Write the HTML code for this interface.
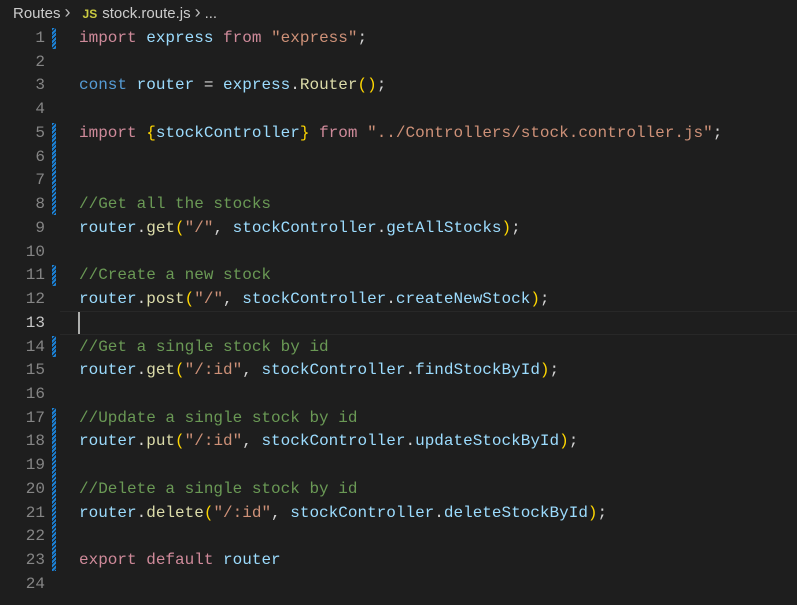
<!DOCTYPE html>
<html><head><style>
body{margin:0;width:797px;height:605px;background:#1e1e1e;overflow:hidden;position:relative;font-family:"Liberation Mono",monospace;}
.bc{position:absolute;left:13px;top:5px;font:15px "Liberation Sans",sans-serif;color:#cccccc;white-space:nowrap;}
.bc .js{color:#cbcb41;font-weight:bold;font-size:12px;margin:0 5px 0 8px;}
.bc .ch{color:#bbb;margin:0 4px;font-size:18px;line-height:15px;}
.ln{position:absolute;left:0;width:45px;text-align:right;color:#858585;font-size:16px;line-height:23.74px;}
.ln div{height:23.74px;}
.code{position:absolute;left:79px;font-size:16px;line-height:23.74px;color:#d4d4d4;}
.row{height:23.74px;white-space:pre;}
.k{color:#cf8a9a}.b{color:#569cd6}.v{color:#9cdcfe}.f{color:#dcdcaa}.s{color:#ce9178}.c{color:#6a9955}.y{color:#ffd700}
.strip{position:absolute;left:52px;width:4px;background:repeating-linear-gradient(135deg,#1b81d6 0 2px,#1e1e1e 2px 3px);}
.cur{position:absolute;left:60px;right:0;top:311px;height:22px;border-top:1px solid #282828;border-bottom:1px solid #282828;}
.caret{position:absolute;left:78px;top:312px;width:2px;height:22px;background:#aeafad;}
</style></head><body>
<div class="bc">Routes<span class="ch">&#x203A;</span><span class="js">JS</span>stock.route.js<span class="ch">&#x203A;</span>...</div>
<div class="cur"></div><div class="caret"></div>
<div class="strip" style="top:28px;height:21px"></div>
<div class="strip" style="top:123px;height:92px"></div>
<div class="strip" style="top:265px;height:21px"></div>
<div class="strip" style="top:336px;height:21px"></div>
<div class="strip" style="top:408px;height:163px"></div>
<div class="ln" style="top:27px"><div>1</div><div>2</div><div>3</div><div>4</div><div>5</div><div>6</div><div>7</div><div>8</div><div>9</div><div>10</div><div>11</div><div>12</div><div style="color:#c6c6c6">13</div><div>14</div><div>15</div><div>16</div><div>17</div><div>18</div><div>19</div><div>20</div><div>21</div><div>22</div><div>23</div><div>24</div></div>
<div class="code" style="top:27px"><div class="row"><span class="k">import</span> <span class="v">express</span> <span class="k">from</span> <span class="s">"express"</span>;</div><div class="row"></div><div class="row"><span class="b">const</span> <span class="v">router</span> = <span class="v">express</span>.<span class="f">Router</span><span class="y">()</span>;</div><div class="row"></div><div class="row"><span class="k">import</span> <span class="y">{</span><span class="v">stockController</span><span class="y">}</span> <span class="k">from</span> <span class="s">"../Controllers/stock.controller.js"</span>;</div><div class="row"></div><div class="row"></div><div class="row"><span class="c">//Get all the stocks</span></div><div class="row"><span class="v">router</span>.<span class="f">get</span><span class="y">(</span><span class="s">"/"</span>, <span class="v">stockController</span>.<span class="v">getAllStocks</span><span class="y">)</span>;</div><div class="row"></div><div class="row"><span class="c">//Create a new stock</span></div><div class="row"><span class="v">router</span>.<span class="f">post</span><span class="y">(</span><span class="s">"/"</span>, <span class="v">stockController</span>.<span class="v">createNewStock</span><span class="y">)</span>;</div><div class="row"></div><div class="row"><span class="c">//Get a single stock by id</span></div><div class="row"><span class="v">router</span>.<span class="f">get</span><span class="y">(</span><span class="s">"/:id"</span>, <span class="v">stockController</span>.<span class="v">findStockById</span><span class="y">)</span>;</div><div class="row"></div><div class="row"><span class="c">//Update a single stock by id</span></div><div class="row"><span class="v">router</span>.<span class="f">put</span><span class="y">(</span><span class="s">"/:id"</span>, <span class="v">stockController</span>.<span class="v">updateStockById</span><span class="y">)</span>;</div><div class="row"></div><div class="row"><span class="c">//Delete a single stock by id</span></div><div class="row"><span class="v">router</span>.<span class="f">delete</span><span class="y">(</span><span class="s">"/:id"</span>, <span class="v">stockController</span>.<span class="v">deleteStockById</span><span class="y">)</span>;</div><div class="row"></div><div class="row"><span class="k">export</span> <span class="k">default</span> <span class="v">router</span></div><div class="row"></div></div>
</body></html>
